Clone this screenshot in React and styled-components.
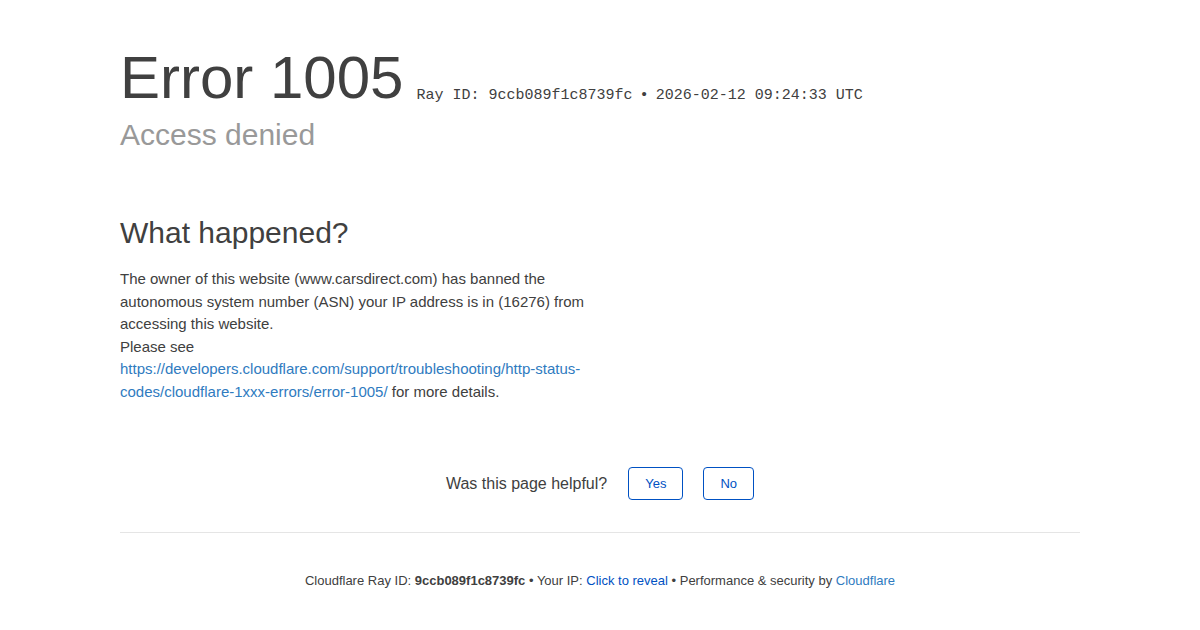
import React from "react";
import styled, { createGlobalStyle } from "styled-components";

const Global = createGlobalStyle`
  html, body { margin: 0; padding: 0; background: #fff; }
  body { font-family: "Liberation Sans", Arial, sans-serif; color: #404040; }
`;

const Page = styled.div`
  width: 960px;
  margin: 0 auto;
  padding-top: 44px;
`;

const Header = styled.header`
  display: flex;
  flex-direction: column;
`;

const TitleRow = styled.div`
  display: flex;
  align-items: baseline;
  gap: 13px;
`;

const Title = styled.h1`
  margin: 0;
  font-size: 60px;
  font-weight: 300;
  line-height: 68px;
  color: #404040;
`;

const RayMeta = styled.span`
  font-family: "Liberation Mono", "DejaVu Sans Mono", monospace;
  font-size: 15px;
  color: #404040;
  position: relative;
  top: 1px;
  white-space: pre;
`;

const Bullet = styled.span`
  font-family: "Liberation Sans", Arial, sans-serif;
`;

const Subtitle = styled.h2`
  margin: 3px 0 0;
  font-size: 30px;
  font-weight: 300;
  line-height: 40px;
  color: #999;
`;

const Section = styled.section`
  margin-top: 60px;
  width: 480px;
`;

const SectionTitle = styled.h2`
  margin: 0 0 17px;
  font-size: 30px;
  font-weight: 300;
  line-height: 36px;
  color: #404040;
`;

const Body = styled.p`
  margin: 0;
  font-size: 15px;
  line-height: 22.5px;
  color: #404040;
`;

const Link = styled.a`
  color: ${(p) => (p.$dark ? "#0051c3" : "#2f7bbf")};
  text-decoration: none;
`;

const Feedback = styled.div`
  display: flex;
  justify-content: center;
  align-items: center;
  gap: 20px;
  margin-top: 64px;
`;

const Question = styled.span`
  font-size: 16px;
  color: #404040;
  margin-right: 1px;
`;

const Btn = styled.button`
  font-family: "Liberation Sans", Arial, sans-serif;
  font-size: 13px;
  color: #0051c3;
  background: #fff;
  border: 1px solid #0051c3;
  border-radius: 4px;
  height: 33px;
  padding: 0 ${(p) => p.$pad}px;
  cursor: pointer;
`;

const Divider = styled.hr`
  border: 0;
  border-top: 1px solid #e5e5e5;
  margin: 32px 0 0;
`;

const Footer = styled.footer`
  text-align: center;
  font-size: 13px;
  line-height: 20px;
  color: #404040;
  margin-top: 38px;
`;

export default function App() {
  return (
    <>
      <Global />
      <Page>
        <Header>
          <TitleRow>
            <Title>Error 1005</Title>
            <RayMeta>
              Ray ID: 9ccb089f1c8739fc <Bullet>&bull;</Bullet> 2026-02-12 09:24:33 UTC
            </RayMeta>
          </TitleRow>
          <Subtitle>Access denied</Subtitle>
        </Header>
        <Section>
          <SectionTitle>What happened?</SectionTitle>
          <Body>
            The owner of this website (www.carsdirect.com) has banned the autonomous system number (ASN) your IP address is in (16276) from accessing this website.
          </Body>
          <Body>
            Please see{" "}
            <Link href="#">https://developers.cloudflare.com/support/troubleshooting/http-status-codes/cloudflare-1xxx-errors/error-1005/</Link>{" "}
            for more details.
          </Body>
        </Section>
        <Feedback>
          <Question>Was this page helpful?</Question>
          <Btn $pad={16}>Yes</Btn>
          <Btn $pad={16}>No</Btn>
        </Feedback>
        <Divider />
        <Footer>
          Cloudflare Ray ID: <strong>9ccb089f1c8739fc</strong> &bull; Your IP:{" "}
          <Link $dark href="#">Click to reveal</Link> &bull; Performance &amp; security by{" "}
          <Link href="#">Cloudflare</Link>
        </Footer>
      </Page>
    </>
  );
}
